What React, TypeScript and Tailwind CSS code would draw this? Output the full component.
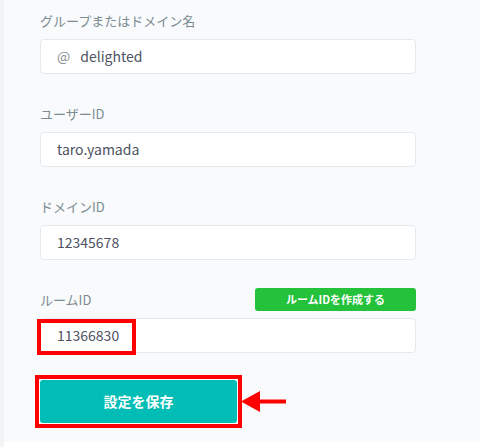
const font = { fontFamily: '"Noto Sans CJK JP", "Noto Sans", sans-serif' };

function Label({ children }: { children: React.ReactNode }) {
  return <span className="text-[13px] leading-[20px] text-[#7b8b92]">{children}</span>;
}

function Field({ label, value, prefix, first }: { label: string; value: string; prefix?: string; first?: boolean }) {
  return (
    <div className={first ? "" : "mt-[28px]"}>
      <div className="h-[23px] flex items-center mb-[7px]">
        <Label>{label}</Label>
      </div>
      <div className="h-[35px] w-[376px] bg-white border border-[#e4e9ef] rounded-[4px] flex items-center pl-[16px] text-[14px] text-[#4d5262]">
        {prefix && <span className="text-[#8a9099] mr-[10px]">{prefix}</span>}
        <span>{value}</span>
      </div>
    </div>
  );
}

export default function App() {
  return (
    <div className="w-[480px] h-[447px] flex overflow-hidden" style={font}>
      <div className="w-[4px] bg-[#f1f3f4]" />
      <div className="flex-1 flex flex-col">
        <div className="h-[442px] bg-[#f8fafb] pl-[36px] pt-[9px]">
          <Field first label="グループまたはドメイン名" prefix="@" value="delighted" />
          <Field label="ユーザーID" value="taro.yamada" />
          <Field label="ドメインID" value="12345678" />

          <div className="mt-[28px]">
            <div className="h-[23px] w-[376px] flex items-center justify-between mb-[7px]">
              <Label>ルームID</Label>
              <button className="h-[23px] w-[161px] rounded-[3px] bg-[#24c13b] text-white text-[11px] font-bold">
                ルームIDを作成する
              </button>
            </div>
            <div className="relative h-[35px] w-[376px] bg-white border border-[#e4e9ef] rounded-[4px] flex items-center pl-[16px] text-[14px] text-[#4d5262]">
              <span>11366830</span>
              <div className="absolute left-[-4px] top-0 w-[99px] h-[36px] border-[4px] border-[#ff0000]" />
            </div>
          </div>

          <div className="mt-[22px] -ml-[5px] flex items-center">
            <div className="border-[4px] border-[#ff0000] bg-white p-[1px]">
              <button className="w-[197px] h-[43px] rounded-[3px] bg-[#02bdb5] text-white text-[14px] font-bold">
                設定を保存
              </button>
            </div>
            <svg width="46" height="21" viewBox="0 0 46 21" className="ml-[-1px]">
              <polygon points="0,10.5 19,0 19,21" fill="#ff0000" />
              <rect x="18" y="8.5" width="27" height="4" fill="#ff0000" />
            </svg>
          </div>
        </div>
        <div className="flex-1 bg-white" />
      </div>
    </div>
  );
}
